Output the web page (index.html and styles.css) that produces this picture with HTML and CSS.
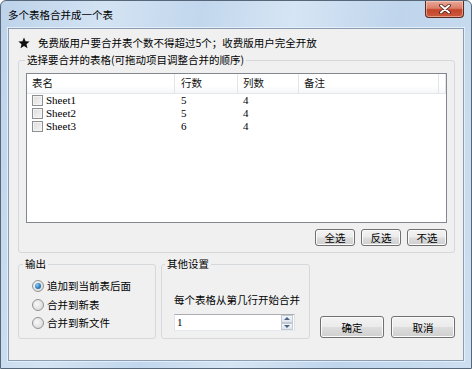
FILE: index.html
```html
<!DOCTYPE HTML>
<html>
<head>
 <title>多个表格合并成一个表</title>
 <meta charset="utf-8">
 <link rel="stylesheet" href="styles.css">
</head>
<body>
<div class="window">
  <div class="titlebar">
    <span class="title">多个表格合并成一个表</span>
    <div class="close-btn">
      <svg width="14" height="10" viewBox="0 0 14 10">
        <path d="M3 1.5 L11 8.5 M11 1.5 L3 8.5" stroke="#4a1a12" stroke-width="3.6" stroke-linecap="round"/>
        <path d="M3 1.5 L11 8.5 M11 1.5 L3 8.5" stroke="#fff" stroke-width="2" stroke-linecap="round"/>
      </svg>
    </div>
  </div>

  <div class="client">
    <div class="notice">
      <svg class="star" width="12" height="12" viewBox="0 0 24 24">
        <path d="M12 1 L15.1 8.6 L23.3 9.2 L17 14.5 L19 22.5 L12 18.1 L5 22.5 L7 14.5 L0.7 9.2 L8.9 8.6 Z" fill="#111"/>
      </svg>
      <span>免费版用户要合并表个数不得超过5个；收费版用户完全开放</span>
    </div>

    <fieldset class="group tables-group">
      <legend>选择要合并的表格(可拖动项目调整合并的顺序)</legend>
      <div class="group-body">
        <div class="listview">
          <div class="lv-head">
            <div class="col col-name">表名</div>
            <div class="col col-rows">行数</div>
            <div class="col col-cols">列数</div>
            <div class="col col-note">备注</div>
            <div class="col col-rest"></div>
          </div>
          <div class="lv-row">
            <div class="col col-name"><span class="checkbox"></span><span class="mono">Sheet1</span></div>
            <div class="col col-rows mono">5</div>
            <div class="col col-cols mono">4</div>
          </div>
          <div class="lv-row">
            <div class="col col-name"><span class="checkbox"></span><span class="mono">Sheet2</span></div>
            <div class="col col-rows mono">5</div>
            <div class="col col-cols mono">4</div>
          </div>
          <div class="lv-row">
            <div class="col col-name"><span class="checkbox"></span><span class="mono">Sheet3</span></div>
            <div class="col col-rows mono">6</div>
            <div class="col col-cols mono">4</div>
          </div>
        </div>
        <div class="select-buttons">
          <div class="btn small">全选</div>
          <div class="btn small">反选</div>
          <div class="btn small">不选</div>
        </div>
      </div>
    </fieldset>

    <div class="bottom-row">
      <fieldset class="group output-group">
        <legend>输出</legend>
        <div class="radio-list">
          <div class="radio-row"><span class="radio checked"></span>追加到当前表后面</div>
          <div class="radio-row"><span class="radio"></span>合并到新表</div>
          <div class="radio-row"><span class="radio"></span>合并到新文件</div>
        </div>
      </fieldset>

      <fieldset class="group other-group">
        <legend>其他设置</legend>
        <div class="other-body">
          <div class="start-label">每个表格从第几行开始合并</div>
          <div class="spin">
            <span class="spin-value mono">1</span>
            <div class="spin-arrows">
              <div class="spin-up"></div>
              <div class="spin-down"></div>
            </div>
          </div>
        </div>
      </fieldset>

      <div class="actions">
        <div class="btn big">确定</div>
        <div class="btn big">取消</div>
      </div>
    </div>
  </div>
</div>
</body>
</html>
```

FILE: styles.css
```css
body{
 margin:0;
 background:#fff;
 font-family:"Noto Sans CJK SC","Noto Sans",sans-serif;
 font-size:10.5px;
 color:#111;
}

.window{
 width:472px;
 height:369px;
 box-sizing:border-box;
 border:1px solid #56677a;
 border-radius:6px 6px 0 0;
 padding:0 7px 7px 7px;
 background:linear-gradient(100deg,#bdd3ea 0%,#d3e3f3 20%,#c2d7ed 38%,#d6e5f4 55%,#bfd5ec 75%,#cddff1 100%);
 display:flex;
 flex-direction:column;
}

.titlebar{
 height:27px;
 display:flex;
 align-items:center;
 justify-content:space-between;
 flex-shrink:0;
}
.title{
 line-height:14px;
 margin-top:1px;
 color:#000;
}
.close-btn{
 align-self:flex-start;
 width:39px;
 height:17px;
 box-sizing:border-box;
 border:1px solid #5b2a20;
 border-top:none;
 border-radius:0 0 4px 4px;
 background:linear-gradient(#e9a99a 0%,#dc7e69 45%,#c3452c 55%,#cc5a3d 100%);
 box-shadow:inset 0 0 0 1px rgba(255,220,210,0.5);
 display:flex;
 align-items:center;
 justify-content:center;
}

.client{
 flex:1;
 border:1px solid #8a9db3;
 box-shadow:0 0 0 1px #e4eef8;
 background:#f0f0f0;
 display:flex;
 flex-direction:column;
}

.notice{
 display:flex;
 align-items:center;
 height:16px;
 margin-top:6px;
 padding-left:9px;
 line-height:14px;
 color:#000;
}
.star{
 margin-right:8px;
}

/* group boxes: legend sits on the top border */
.group{
 border:1px solid #d5d9dc;
 border-radius:3px;
 margin:0;
 padding:0;
 min-width:0;
}
.group legend{
 padding:0 2px;
 line-height:14px;
 height:14px;
 color:#000;
}

.tables-group{
 margin:2px 8px 0 9px;
}
.tables-group legend{
 margin-left:6px;
}
.group-body{
 padding:6px 7px 6px 7px;
}

.listview{
 height:150px;
 box-sizing:border-box;
 border:1px solid #828790;
 background:#fff;
}
.lv-head{
 display:flex;
 height:19px;
 border-bottom:1px solid #e3e6ea;
 background:linear-gradient(#fff 0%,#fff 60%,#f6f7f8 100%);
}
.lv-head .col{
 line-height:18px;
 border-right:1px solid #e3e5e8;
}
.col{
 box-sizing:border-box;
 padding-left:5px;
 flex-shrink:0;
}
.col-name{width:148px;}
.col-rows{width:63px;padding-left:6px;}
.col-cols{width:61px;}
.col-note{width:140px;}
.col-rest{flex:1;}

.lv-row{
 display:flex;
 height:13px;
 align-items:center;
 color:#000;
}
.lv-row .col-name{
 display:flex;
 align-items:center;
}
.mono{
 font-family:"Liberation Serif",serif;
 font-size:11px;
 line-height:13px;
 color:#000;
}
.checkbox{
 width:11px;
 height:11px;
 box-sizing:border-box;
 border:1px solid #8e8f8f;
 background:linear-gradient(135deg,#dcdcdc,#f6f6f6);
 box-shadow:inset 0 0 0 1px #f4f4f4;
 margin-right:3px;
}

.select-buttons{
 display:flex;
 justify-content:flex-end;
 gap:6px;
 margin-top:6px;
}

.btn{
 box-sizing:border-box;
 border:1px solid #707070;
 border-radius:3px;
 background:linear-gradient(#f3f3f3 0%,#ebebeb 48%,#dddddd 52%,#cfcfcf 100%);
 box-shadow:inset 0 0 0 1px #fbfbfb;
 display:flex;
 align-items:center;
 justify-content:center;
 color:#000;
}
.btn.small{
 width:40px;
 height:17px;
 line-height:14px;
}
.btn.big{
 width:64px;
 height:22px;
}

.bottom-row{
 display:flex;
 align-items:flex-end;
 margin:4px 0 0 9px;
}

.output-group{
 width:138px;
 height:82px;
 box-sizing:border-box;
}
.output-group legend{
 margin-left:4px;
}
.radio-list{
 display:flex;
 flex-direction:column;
 gap:4.5px;
 padding:8px 0 0 13px;
}
.radio-row{
 display:flex;
 align-items:center;
 height:14px;
 line-height:14px;
 color:#000;
}
.radio{
 width:12px;
 height:12px;
 box-sizing:border-box;
 border-radius:50%;
 border:1px solid #939393;
 background:radial-gradient(circle at 40% 40%,#f8f8f8 0%,#e2e2e2 60%,#cfcfcf 100%);
 margin-right:3px;
 display:flex;
 align-items:center;
 justify-content:center;
}
.radio.checked::after{
 content:"";
 width:6px;
 height:6px;
 border-radius:50%;
 background:radial-gradient(circle at 35% 35%,#8fd0f5 0%,#2b7bbd 55%,#174f86 100%);
}

.other-group{
 width:149px;
 height:82px;
 box-sizing:border-box;
 margin-left:5px;
}
.other-group legend{
 margin-left:3px;
}
.other-body{
 padding:22px 0 0 12px;
}
.start-label{
 line-height:14px;
 color:#000;
}
.spin{
 margin-top:7px;
 width:121px;
 height:17px;
 box-sizing:border-box;
 border:1px solid #abadb3;
 border-left-color:#e2e3ea;
 border-right-color:#dbdfe6;
 border-bottom-color:#e3e9ef;
 background:#fff;
 display:flex;
 justify-content:space-between;
 align-items:center;
}
.spin-value{
 padding-left:2px;
}
.spin-arrows{
 width:12px;
 height:15px;
 display:flex;
 flex-direction:column;
 margin-right:1px;
}
.spin-up,.spin-down{
 flex:1;
 box-sizing:border-box;
 border:1px solid #c2c9d3;
 background:linear-gradient(#f3f6fa,#dde5ee);
 display:flex;
 align-items:center;
 justify-content:center;
}
.spin-up::after{
 content:"";
 border-left:3px solid transparent;
 border-right:3px solid transparent;
 border-bottom:3px solid #4d6185;
}
.spin-down::after{
 content:"";
 border-left:3px solid transparent;
 border-right:3px solid transparent;
 border-top:3px solid #4d6185;
}

.actions{
 display:flex;
 gap:7px;
 margin-left:10px;
 margin-bottom:1px;
}
```
